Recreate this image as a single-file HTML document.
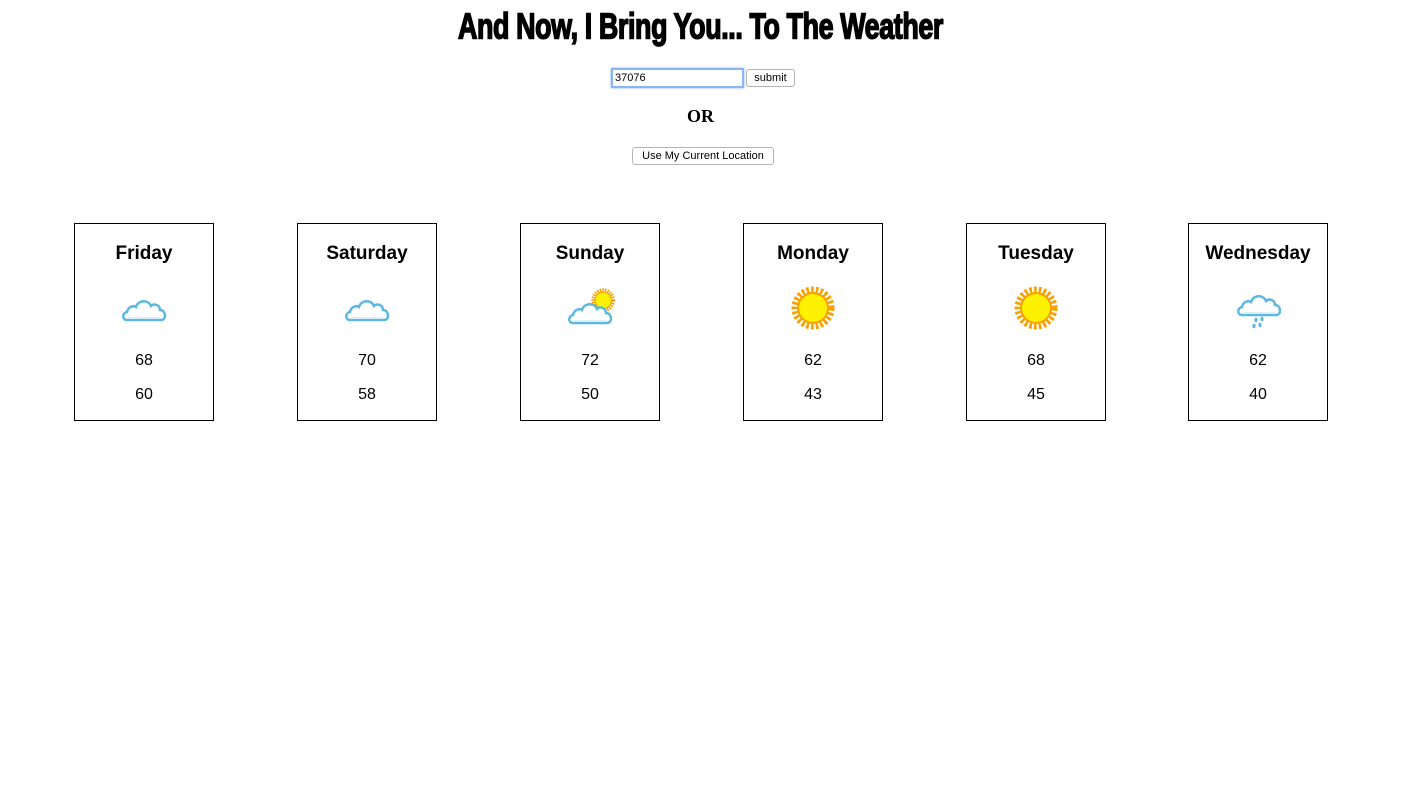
<!DOCTYPE html>
<html><head><style>
body{margin:0;background:#fff;font-family:"Liberation Sans",Arial,sans-serif;width:1401px;height:785px;position:relative;overflow:hidden}
h1{position:absolute;left:0;right:0;top:8px;margin:0;text-align:center;font-family:"Liberation Sans Narrow","Liberation Sans",sans-serif;font-weight:bold;font-size:34px;letter-spacing:-0.5px;transform:scale(0.79,1.05);-webkit-text-stroke:1.5px #000;color:#000}
.inp{position:absolute;left:611px;top:68px;width:127px;height:16px;border:2px solid #8ab6ef;box-shadow:0 0 2px #7aa8ea;font-size:11px;line-height:16px;padding-left:2px;box-sizing:content-box}
.btn{position:absolute;border:1px solid #b5b5b5;border-radius:3px;background:#fff;font-size:11px;text-align:center;box-sizing:border-box}
.or{position:absolute;left:0;right:0;top:106px;text-align:center;font-family:"Liberation Serif",serif;font-weight:bold;font-size:18px}
.card{position:absolute;top:223px;width:140px;height:198px;border:1px solid #000;box-sizing:border-box;text-align:center}
.card .d{position:absolute;top:19px;left:0;right:0;font-weight:bold;font-size:19px}
.card svg{position:absolute;left:45px;top:62px}
.card .t{position:absolute;left:0;right:0;font-size:16px}
</style></head><body>
<h1>And Now, I Bring You... To The Weather</h1>
<div class="inp">37076</div>
<div class="btn" style="left:746px;top:69px;width:49px;height:18px;line-height:16px">submit</div>
<div class="or">OR</div>
<div class="btn" style="left:632px;top:147px;width:142px;height:18px;line-height:16px">Use My Current Location</div>

<svg width="0" height="0" style="position:absolute"><defs>
<g id="cloud"><path d="M6 30 C1 30 1 23 6 22 C7 17 12 15 15 17 C17 10 27 9 30 16 C33 13 39 15 39 20 C45 20 46 30 40 30 Z" fill="#fff" stroke="#5bb8e3" stroke-width="2.5"/><path d="M7 28 L39 28" stroke="#d8eef8" stroke-width="2"/></g>
<g id="sun"><circle cx="24" cy="24" r="18" fill="none" stroke="#f7a000" stroke-width="7" stroke-dasharray="2.6 2"/><circle cx="24" cy="24" r="16" fill="#f7a000"/><circle cx="24" cy="24" r="14" fill="#fff200"/></g>
</defs></svg>

<div class="card" style="left:74px"><div class="d">Friday</div><svg width="50" height="48"><use href="#cloud" x="1" y="4"/></svg><div class="t" style="top:128px">68</div><div class="t" style="top:162px">60</div></div>
<div class="card" style="left:297px"><div class="d">Saturday</div><svg width="50" height="48"><use href="#cloud" x="1" y="4"/></svg><div class="t" style="top:128px">70</div><div class="t" style="top:162px">58</div></div>
<div class="card" style="left:520px"><div class="d">Sunday</div><svg width="50" height="48"><g transform="translate(24,1) scale(0.55)"><use href="#sun"/></g><use href="#cloud" x="1" y="7"/></svg><div class="t" style="top:128px">72</div><div class="t" style="top:162px">50</div></div>
<div class="card" style="left:743px"><div class="d">Monday</div><svg width="50" height="48"><use href="#sun" x="0" y="-2"/></svg><div class="t" style="top:128px">62</div><div class="t" style="top:162px">43</div></div>
<div class="card" style="left:966px"><div class="d">Tuesday</div><svg width="50" height="48"><use href="#sun" x="0" y="-2"/></svg><div class="t" style="top:128px">68</div><div class="t" style="top:162px">45</div></div>
<div class="card" style="left:1188px"><div class="d">Wednesday</div><svg width="50" height="48"><use href="#cloud" x="2" y="-1"/><g fill="#5bb8e3"><ellipse cx="22" cy="34" rx="1.6" ry="2.2"/><ellipse cx="28" cy="33" rx="1.6" ry="2.2"/><ellipse cx="20" cy="40" rx="1.6" ry="2.2"/><ellipse cx="26" cy="39" rx="1.6" ry="2.2"/></g></svg><div class="t" style="top:128px">62</div><div class="t" style="top:162px">40</div></div>
</body></html>
